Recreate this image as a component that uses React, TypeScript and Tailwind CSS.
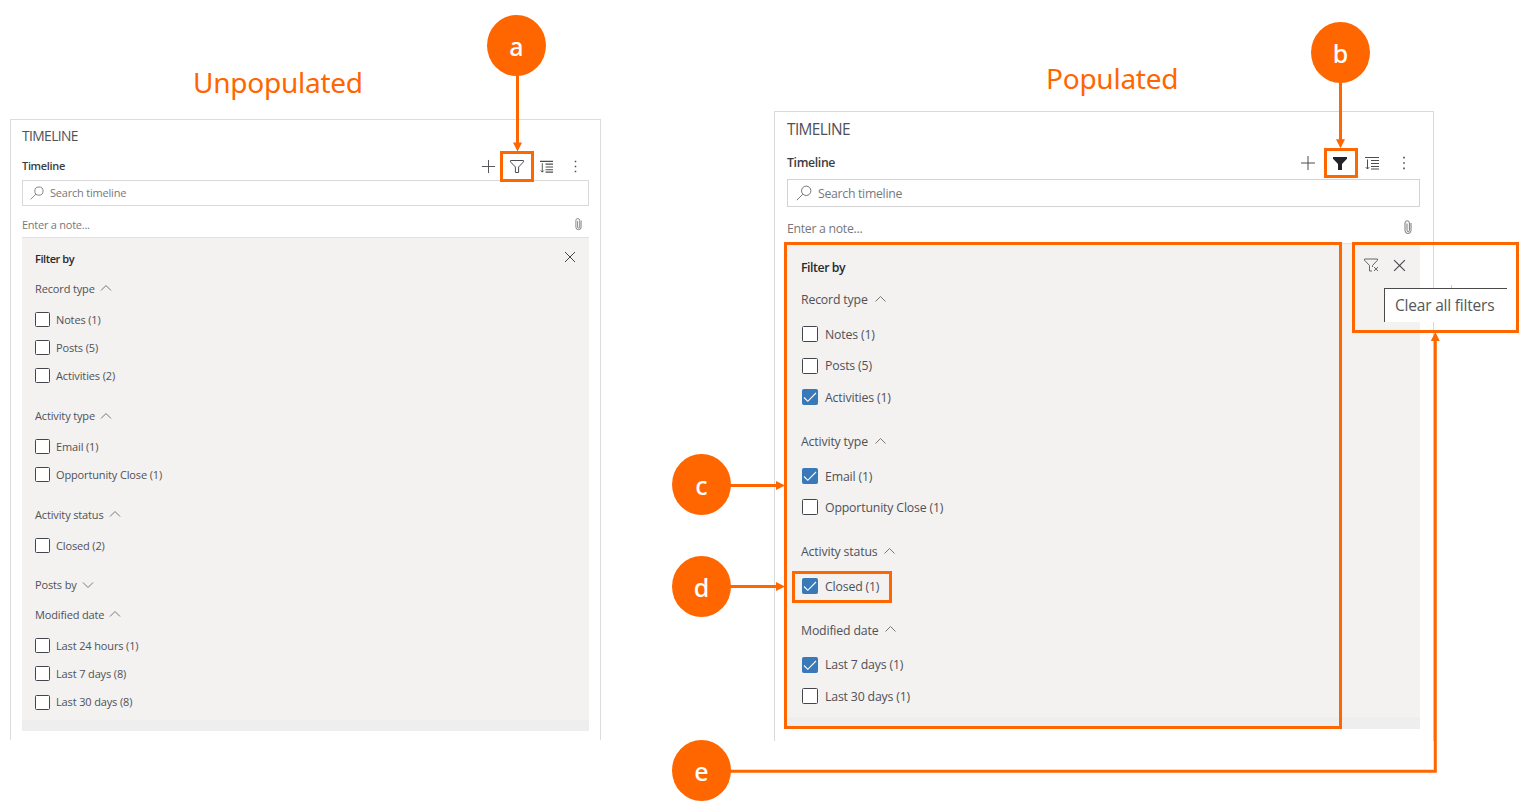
import React from "react";
import { clsx } from "clsx";

type Item = { label: string; checked?: boolean };
type Group = { title: string; open: boolean; head: string; items: Item[] };

const unpopulated: Group[] = [
  { title: "Record type", open: true, head: "h-[33.7px]", items: [{ label: "Notes (1)" }, { label: "Posts (5)" }, { label: "Activities (2)" }] },
  { title: "Activity type", open: true, head: "mt-[8.6px] h-[33.7px]", items: [{ label: "Email (1)" }, { label: "Opportunity Close (1)" }] },
  { title: "Activity status", open: true, head: "mt-[8.6px] h-[33.7px]", items: [{ label: "Closed (2)" }] },
  { title: "Posts by", open: false, head: "mt-[12.8px] h-[25.3px]", items: [] },
  { title: "Modified date", open: true, head: "h-[33.7px]", items: [{ label: "Last 24 hours (1)" }, { label: "Last 7 days (8)" }, { label: "Last 30 days (8)" }] },
];

const populated: Group[] = [
  { title: "Record type", open: true, head: "h-[37.8px]", items: [{ label: "Notes (1)" }, { label: "Posts (5)" }, { label: "Activities (1)", checked: true }] },
  { title: "Activity type", open: true, head: "mt-[9.4px] h-[37.8px]", items: [{ label: "Email (1)", checked: true }, { label: "Opportunity Close (1)" }] },
  { title: "Activity status", open: true, head: "mt-[9.4px] h-[37.8px]", items: [{ label: "Closed (1)", checked: true }] },
  { title: "Modified date", open: true, head: "mt-[9.4px] h-[37.8px]", items: [{ label: "Last 7 days (1)", checked: true }, { label: "Last 30 days (1)" }] },
];

function Icon({ className, box = "0 0 16 16", children }: { className: string; box?: string; children: React.ReactNode }) {
  return (
    <svg className={clsx("shrink-0", className)} viewBox={box} fill="none" stroke="currentColor" strokeWidth="1">
      {children}
    </svg>
  );
}

const Chevron = ({ open, className }: { open: boolean; className: string }) => (
  <Icon className={className} box="0 0 12 8">
    <path d={open ? "M1 6.5 6 1.5l5 5" : "M1 1.5l5 5 5-5"} stroke="#777" />
  </Icon>
);

const Plus = ({ className }: { className: string }) => (
  <Icon className={className}><path d="M8 1v14M1 8h14" /></Icon>
);

const Funnel = ({ className }: { className: string }) => (
  <Icon className={className}><path d="M1.5 2.5h13v1.3L9.6 9v5.5H6.4V9L1.5 3.8z" /></Icon>
);

const SolidFunnel = ({ className }: { className: string }) => (
  <Icon className={className}><path d="M1 2h14v1.800L10 9v6H6V9L1 3.800z" fill="#222327" stroke="none" /></Icon>
);

const ClearFunnel = ({ className }: { className: string }) => (
  <Icon className={className}>
    <path d="M9 14H6.500V8.500L1.500 3.200V2h13v1.200L9.500 8.500V10" />
    <path d="M11 10l4 4M15 10l-4 4" />
  </Icon>
);

const Sort = ({ className }: { className: string }) => (
  <Icon className={className}>
    <path d="M1 2.500H15M7 5.500H15M7 8.500H15M7 11.500H15M7 14H15" strokeWidth="1.200" />
    <path d="M3.500 4.500V14M1.800 12.200l1.700 1.800 1.700-1.800" />
  </Icon>
);

const More = ({ className }: { className: string }) => (
  <Icon className={className}>
    <path d="M7.200 1.800h1.600v1.600H7.200zM7.200 7.200h1.600v1.600H7.200zM7.200 12.600h1.600v1.600H7.200z" fill="currentColor" stroke="none" />
  </Icon>
);

const Cross = ({ className }: { className: string }) => (
  <Icon className={className} box="0 0 12 12"><path d="M1 1l10 10M11 1 1 11" /></Icon>
);

const Magnifier = ({ className }: { className: string }) => (
  <Icon className={className}><circle cx="10.200" cy="5.800" r="4.700" /><path d="M6.800 9.200.8 15.200" /></Icon>
);

const Clip = ({ className }: { className: string }) => (
  <Icon className={className} box="0 0 8 16">
    <path d="M1 4v7.500a3 3 0 0 0 6 0V4M1 4a2.200 2.200 0 0 1 4.400 0v7.500a1.200 1.200 0 0 1-2.400 0V4.500" />
  </Icon>
);

function Checkbox({ checked, className }: { checked?: boolean; className: string }) {
  return (
    <span className={clsx("flex shrink-0 items-center justify-center rounded-[1.500px] border", checked ? "border-[#3a79b7] bg-[#3a79b7]" : "border-[#45464d] bg-white", className)}>
      {checked && (
        <svg className="h-[14px] w-[14px]" viewBox="0 0 14 14" fill="none" stroke="#fff" strokeWidth="1.100">
          <path d="M1 7.500 4.800 11.300 13 3" />
        </svg>
      )}
    </span>
  );
}

function UnpopulatedPanel() {
  return (
    <section className="ml-[10px] mt-[119px] h-[621px] w-[591px] shrink-0 border-x border-t border-[#dcdcdc] pl-[11px] pr-[11px] text-[11px] tracking-[-0.14px] text-[#505157]">
      <h2 className="mt-[7px] h-[18px] text-[13.800px] leading-[18px] tracking-[-0.6px]">TIMELINE</h2>
      <div className="mt-[12px] flex h-[18px] items-center">
        <h3 className="font-semibold leading-[18px] tracking-[-0.33px] text-[#3b3c42]">Timeline</h3>
        <div className="ml-auto flex items-center pr-[6px] text-[#4c4d52]">
          <Plus className="h-[15px] w-[15px]" />
          <Funnel className="ml-[13px] h-[16px] w-[16px]" />
          <Sort className="ml-[14px] h-[15px] w-[15px]" />
          <More className="ml-[14px] h-[15px] w-[15px]" />
        </div>
      </div>
      <div className="mt-[5px] flex h-[26px] items-center border border-[#d9d9d9] pl-[7px] tracking-[-0.2px] text-[#77787c]">
        <Magnifier className="h-[14px] w-[14px]" />
        <span className="ml-[6px] pt-[1px]">Search timeline</span>
      </div>
      <div className="flex h-[31px] items-center pt-[6px] tracking-[-0.25px] text-[#77787c]">
        <span className="pt-[1px]">Enter a note...</span>
        <Clip className="mb-[2px] ml-auto mr-[7px] h-[14px] w-[7px]" />
      </div>
      <div className="flex h-[494px] w-[567px] flex-col border-t border-[#e2e2e2] bg-[#f3f2f1] px-[13px]">
        <div className="flex h-[42px] items-center justify-between">
          <h4 className="pt-[1px] font-semibold tracking-[-0.42px] text-[#28292e]">Filter by</h4>
          <Cross className="mb-[4px] h-[12px] w-[12px] text-[#45464b]" />
        </div>
        <div className="-mt-[8px]">
          {unpopulated.map((g) => (
            <div key={g.title}>
              <div className={clsx("flex items-center", g.head)}>
                <span>{g.title}</span>
                <Chevron open={g.open} className="mb-[1px] ml-[5px] h-[8px] w-[12px]" />
              </div>
              {g.items.map((i) => (
                <div key={i.label} className="flex h-[28.300px] items-center">
                  <Checkbox checked={i.checked} className="mb-[1px] h-[15px] w-[15px]" />
                  <span className="ml-[6px]">{i.label}</span>
                </div>
              ))}
            </div>
          ))}
        </div>
        <div className="-mx-[13px] mt-auto h-[11px] bg-[#eee]" />
      </div>
    </section>
  );
}

function PopulatedPanel() {
  return (
    <section className="ml-[173px] mt-[111px] h-[630px] w-[660px] shrink-0 border-x border-t border-[#d9d9d9] pl-[12px] pr-[12px] text-[12.300px] tracking-[-0.17px] text-[#505157]">
      <h2 className="mt-[8px] h-[20px] text-[15.400px] leading-[20px] tracking-[-0.6px]">TIMELINE</h2>
      <div className="mt-[13px] flex h-[20px] items-center">
        <h3 className="font-semibold leading-[20px] tracking-[-0.36px] text-[#3b3c42]">Timeline</h3>
        <div className="ml-auto flex items-center pr-[9px] text-[#4c4d52]">
          <Plus className="h-[16px] w-[16px]" />
          <SolidFunnel className="ml-[16px] h-[16px] w-[16px]" />
          <Sort className="ml-[16px] h-[16px] w-[16px]" />
          <More className="ml-[16px] h-[16px] w-[16px]" />
        </div>
      </div>
      <div className="mt-[6px] flex h-[28px] w-[633px] items-center border border-[#d3d3d3] pl-[8px] tracking-[-0.3px] text-[#77787c]">
        <Magnifier className="h-[16px] w-[16px]" />
        <span className="ml-[6px] pt-[2px]">Search timeline</span>
      </div>
      <div className="flex h-[36px] items-center pt-[7px] tracking-[-0.3px] text-[#77787c]">
        <span className="pt-[2px]">Enter a note...</span>
        <Clip className="mb-[3px] ml-auto mr-[9px] h-[16px] w-[8px]" />
      </div>
      <div className="flex h-[486px] w-[633px] flex-col border-t border-[#e2e2e2] bg-[#f3f2f1] px-[14px]">
        <div className="flex h-[46px] items-center">
          <h4 className="pt-[2px] font-semibold tracking-[-0.44px] text-[#28292e]">Filter by</h4>
          <ClearFunnel className="mb-[4px] ml-auto h-[16px] w-[16px] text-[#66676b]" />
          <Cross className="mb-[4px] ml-[14px] h-[13px] w-[13px] text-[#45464b]" />
        </div>
        <div className="-mt-[9px]">
          {populated.map((g) => (
            <div key={g.title}>
              <div className={clsx("flex items-center", g.head)}>
                <span className="pt-[1px]">{g.title}</span>
                <Chevron open={g.open} className="mb-[2px] ml-[6px] h-[8px] w-[13px]" />
              </div>
              {g.items.map((i) => (
                <div key={i.label} className="flex h-[31.500px] items-center">
                  <Checkbox checked={i.checked} className="ml-[1px] mb-[1px] h-[16px] w-[16px]" />
                  <span className="ml-[7px] pt-[1px]">{i.label}</span>
                </div>
              ))}
            </div>
          ))}
        </div>
        <div className="-mx-[14px] mt-auto h-[12px] bg-[#eee]" />
      </div>
    </section>
  );
}

const markers = [
  { letter: "a", at: "left-[487px] top-[15px]" },
  { letter: "b", at: "left-[1311px] top-[22px]" },
  { letter: "c", at: "left-[672px] top-[454px]" },
  { letter: "d", at: "left-[672px] top-[556px]" },
  { letter: "e", at: "left-[672px] top-[740px]" },
];

const highlights = [
  "left-[500px] top-[151px] h-[31px] w-[34px]",
  "left-[1324px] top-[148px] h-[30px] w-[34px]",
  "left-[784px] top-[242px] h-[487px] w-[558px]",
  "left-[792px] top-[571px] h-[32px] w-[100px]",
  "left-[1352px] top-[242px] h-[91px] w-[167px]",
];

export default function App() {
  return (
    <main className="relative flex h-[811px] w-[1532px] items-start overflow-hidden bg-white font-['Open_Sans','Noto_Sans',sans-serif]">
      <UnpopulatedPanel />
      <PopulatedPanel />

      <h1 className="absolute left-[193px] top-[62px] whitespace-nowrap font-['Noto_Sans',sans-serif] text-[28px] leading-[40px] tracking-[-0.25px] text-[#ff6600]">Unpopulated</h1>
      <h1 className="absolute left-[1046px] top-[58px] whitespace-nowrap font-['Noto_Sans',sans-serif] text-[28px] leading-[40px] tracking-[-0.25px] text-[#ff6600]">Populated</h1>

      <div className="absolute left-[1451px] top-[285px] h-[3px] w-px bg-[#ccc]" />
      <div className="absolute left-[1384px] top-[288px] flex h-[34px] w-[123px] items-center whitespace-nowrap border-l border-t border-[#4a4a4a] bg-white pl-[10px] pt-[1px] text-[15.500px] tracking-[-0.2px] text-[#55565b]">
        Clear all filters
      </div>

      {highlights.map((h) => (
        <div key={h} className={clsx("absolute border-3 border-[#ff6600]", h)} />
      ))}

      <svg className="absolute left-0 top-0 h-[811px] w-[1532px]" viewBox="0 0 1532 811" fill="none" stroke="#ff6600" strokeWidth="3">
        <path d="M517.500 74V144M1340.500 81V141M729 485.500H778M729 586.500H778M729 771.300H1435.300V340" />
        <path d="M513 142.500h9l-4.500 9zM1336 139.300h9l-4.500 9zM776 481v9l9-4.500zM776 582v9l9-4.500zM1430.800 341h9l-4.500-9z" fill="#ff6600" stroke="none" />
      </svg>

      {markers.map((m) => (
        <div key={m.letter} className={clsx("absolute flex h-[61px] w-[59px] items-center justify-center rounded-[50%] bg-[#ff6600] pt-[2px] font-['Noto_Sans',sans-serif] text-[25px] font-medium leading-none text-white", m.at)}>
          {m.letter}
        </div>
      ))}
    </main>
  );
}
